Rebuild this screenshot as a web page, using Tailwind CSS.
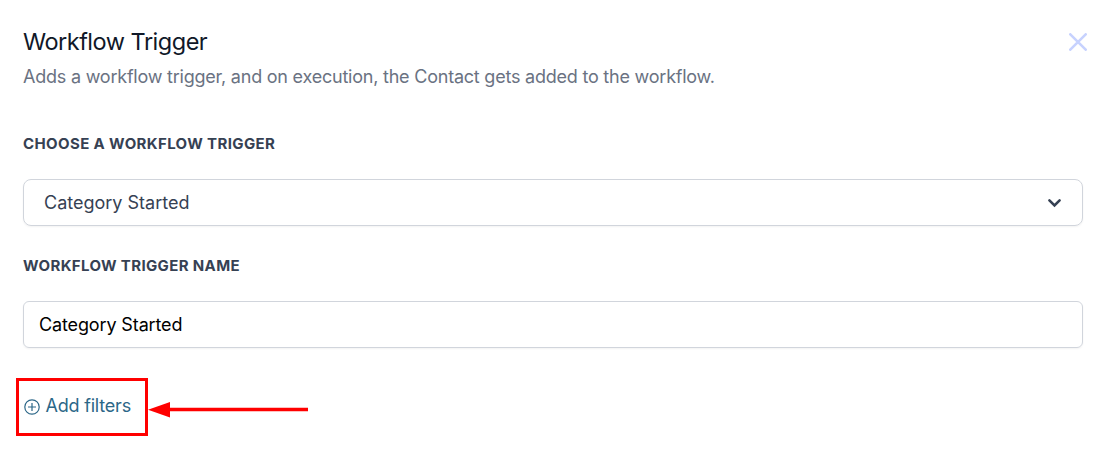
<!DOCTYPE html>
<html lang="en">

<head>
    <meta charset="UTF-8" />
    <title>Workflow Trigger</title>
    <script src="https://cdn.jsdelivr.net/npm/@tailwindcss/browser@4"></script>
</head>

<body class="bg-white font-['Inter',sans-serif] h-[458px] overflow-hidden">
    <div class="pl-[23px] pr-[30px] pt-[26px]">
        <!-- Header -->
        <div class="flex justify-between">
            <div>
                <h2 class="text-[23.5px] leading-8 tracking-[-0.5px] text-gray-900">Workflow Trigger</h2>
                <p class="mt-1 text-[18px] leading-[30px] tracking-[-0.222px] text-gray-500">Adds a workflow trigger, and on execution, the Contact gets added to the workflow.</p>
            </div>
            <button class="-mr-1 mt-[7px] h-[18px] w-[18px]">
                <svg class="h-[18px] w-[18px] text-[#c7d2fe]" viewBox="0 0 18 18" fill="none" stroke="currentColor" stroke-width="2.6" stroke-linecap="round">
                    <path d="M1.3 1.3L16.7 16.7M16.7 1.3L1.3 16.7" />
                </svg>
            </button>
        </div>

        <!-- Trigger select -->
        <label class="mt-[40px] block text-[15px] leading-6 font-bold tracking-[0.38px] text-gray-700">CHOOSE A WORKFLOW TRIGGER</label>
        <div class="mt-[23px] flex h-[47px] items-center justify-between rounded-lg border border-gray-300 pl-5 pr-5 shadow-xs">
            <span class="text-[18px] text-gray-700">Category Started</span>
            <svg class="h-4 w-4 text-gray-700" viewBox="0 0 16 16" fill="none" stroke="currentColor" stroke-width="2.6" stroke-linecap="round">
                <path d="M3.4 5.4L8.5 10.5L13.6 5.4" />
            </svg>
        </div>

        <!-- Trigger name -->
        <label class="mt-[28px] block text-[15px] leading-6 font-bold tracking-[0.36px] text-gray-700">WORKFLOW TRIGGER NAME</label>
        <input type="text" value="Category Started"
            class="mt-[23px] block h-[47px] w-full rounded-md border border-gray-300 px-[15px] text-[18px] tracking-[-0.13px] text-black shadow-xs" />

        <!-- Add filters -->
        <div class="-ml-[7px] mt-[30px] flex items-center">
            <button class="flex h-[58px] w-[132px] items-center border-3 border-[#f00] pb-[3px] pl-[5px] text-[18px] tracking-[-0.2px] text-[#2c6788]">
                <svg class="mr-[5.5px] mt-[2px] h-4 w-4" viewBox="0 0 16 16" fill="none" stroke="currentColor" stroke-width="1.2">
                    <circle cx="8" cy="8" r="7.2" />
                    <path d="M8 4V12M4 8H12" />
                </svg>
                Add filters
            </button>
            <svg class="mt-[5px] h-4 w-40" viewBox="0 0 160 16">
                <path d="M0 7.8L22 0V15.6Z" fill="#f00" />
                <path d="M20 7.5H160" stroke="#f00" stroke-width="3.4" />
            </svg>
        </div>
    </div>
</body>

</html>
